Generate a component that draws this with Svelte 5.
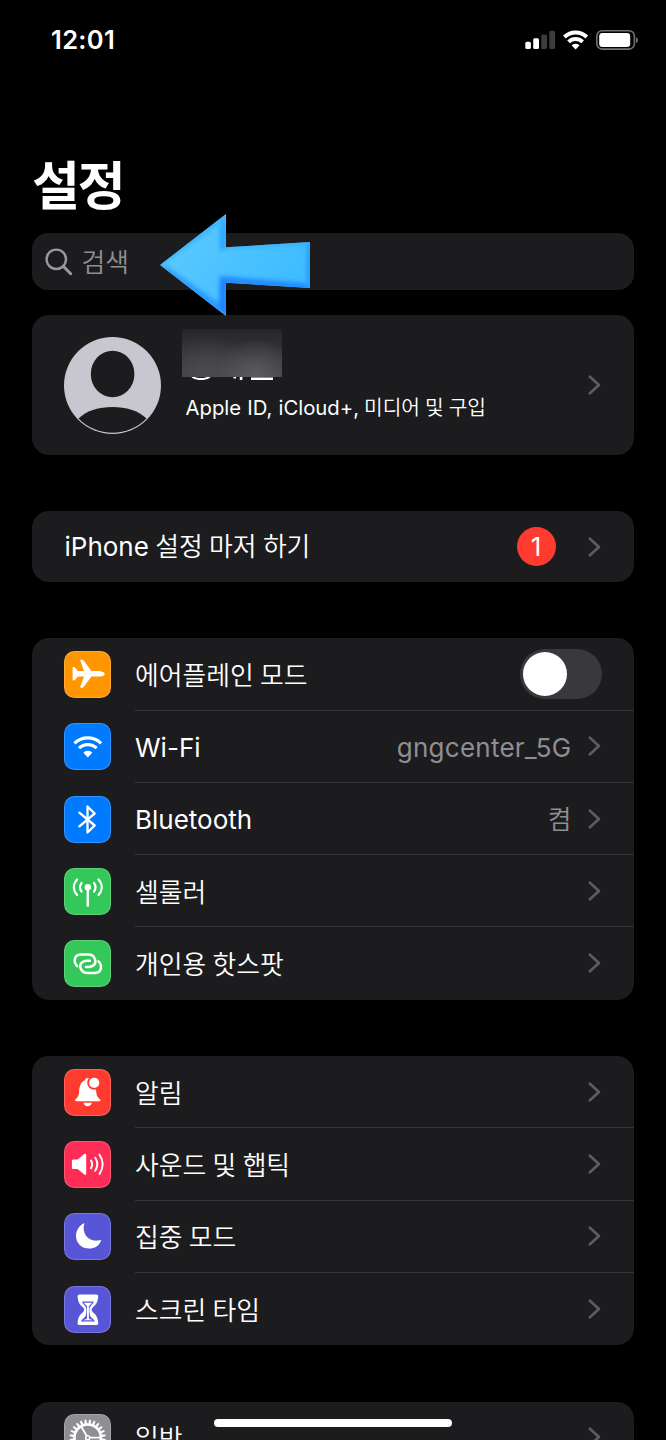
<script>
  const connectivity = [
    { icon: 'plane', color: '#ff9500', label: '에어플레인 모드', ko: true, toggle: true },
    { icon: 'wifi', color: '#007aff', label: 'Wi-Fi', value: 'gngcenter_5G' },
    { icon: 'bluetooth', color: '#007aff', label: 'Bluetooth', value: '켬', valueKo: true },
    { icon: 'cellular', color: '#34c759', label: '셀룰러', ko: true },
    { icon: 'hotspot', color: '#34c759', label: '개인용 핫스팟', ko: true }
  ];
  const alerts = [
    { icon: 'bell', color: '#ff3b30', label: '알림', ko: true },
    { icon: 'sound', color: '#ff2d55', label: '사운드 및 햅틱', ko: true },
    { icon: 'moon', color: '#5856d6', label: '집중 모드', ko: true },
    { icon: 'hourglass', color: '#5856d6', label: '스크린 타임', ko: true }
  ];
  const general = [{ icon: 'gear', color: '#8e8e93', label: '일반', ko: true }];
  const teeth = Array.from({ length: 24 }, (_, i) => i * 15);
</script>

{#snippet chevron()}
  <svg class="chevron" width="13" height="20" viewBox="0 0 13 20" fill="none" stroke="#5b5b60" stroke-width="2.800" stroke-linecap="round" stroke-linejoin="round">
    <path d="M1.900 1.700 10.900 10 1.900 18.300" />
  </svg>
{/snippet}

{#snippet glyph(name)}
  <svg width="47" height="47" viewBox="0 0 47 47" fill="none">
    {#if name === 'plane'}
      <path fill="#fff" d="M36.500 20.100h-9L19.600 9.500c-.3-.5-.7-.7-1.200-.7h-1.500c-.5 0-.8.4-.6.9l3.700 10.400h-6l-3.100-3.600c-.3-.3-.6-.4-1-.4h-.6c-.5 0-.7.3-.7.7v11.900c0 .4.3.7.7.7h.6c.4 0 .7-.1 1-.4l3.100-3.600h6l-3.700 10.400c-.2.5.1.9.6.9h1.500c.5 0 .9-.2 1.200-.7l7.900-10.600h9c2.400 0 4.200-1.100 4.200-2.450s-1.800-2.450-4.200-2.450z" />
    {:else if name === 'wifi'}
      <g stroke="#fff" stroke-width="3.100">
        <path d="M10.500 20.400a18.800 18.800 0 0 1 26.600 0" />
        <path d="M15 25.200a12.500 12.500 0 0 1 17.600 0" />
      </g>
      <path fill="#fff" d="M23.800 34.500l-4-4.200c-.4-.4-.3-.9.1-1.200a6.500 6.500 0 0 1 7.800 0c.4.300.5.800.1 1.200z" />
    {:else if name === 'bluetooth'}
      <path stroke="#fff" stroke-width="2.300" stroke-linejoin="round" stroke-linecap="round" d="M15.400 16.600 30.700 29.500l-7.200 7V10.500l7.200 7L15.400 30.400" />
    {:else if name === 'cellular'}
      <g stroke="#fff" stroke-width="2.200" stroke-linecap="round">
        <path d="M23.800 19.500v18" stroke-width="2.500" />
        <path d="M17.600 14.800c-2 2.800-2 6 0 8.800M30 14.800c2 2.800 2 6 0 8.800M13.100 11.500c-4.300 4.800-4.300 10.600 0 15.400M34.500 11.500c4.300 4.800 4.300 10.600 0 15.400" />
      </g>
      <circle cx="23.800" cy="19.300" r="3.200" fill="#fff" />
    {:else if name === 'hotspot'}
      <g stroke="#fff" stroke-width="2.500" stroke-linecap="round">
        <path d="M13.200 26.200c-3.700-3.300-3.800-11.300 3.500-11.600h7.500c6.900 0 9.600 8.200 4.500 11.300-1.200.7-2.400 1-4.300 1h-2.500" />
        <path d="M34.500 21.400c3.700 3.300 3.800 11.300-3.500 11.600h-7.500c-6.900 0-9.600-8.200-4.500-11.300 1.200-.7 2.400-1 4.300-1h2.500" />
      </g>
    {:else if name === 'bell'}
      <path fill="#fff" d="M12.200 32.200c-1 0-1.500-.9-.9-1.700 2.400-2.300 3.400-3.300 3.800-7.600.5-6 1.400-9.700 5.500-11.500.7-1.700 1.800-2.500 3.100-2.500 1.400 0 2.600.8 3.200 2.500 3.900 1.800 4.900 5.500 5.400 11.500.4 4.300 1.400 5.300 3.800 7.600.7.800.2 1.700-.9 1.700zM19.500 33.800h8.300c-.4 2-2 3.400-4.150 3.400s-3.750-1.400-4.150-3.400z" />
      <circle cx="30.200" cy="13.800" r="7" fill="#ff3b30" />
      <circle cx="30.200" cy="13.800" r="5.100" fill="#fff" />
    {:else if name === 'sound'}
      <path fill="#fff" d="M9.500 18.500h4.200l6.600-5.500c.9-.7 1.900-.3 1.900.8v19c0 1.100-1 1.500-1.900.8l-6.600-5.500H9.500c-1 0-1.600-.6-1.600-1.600v-6.400c0-1 .6-1.600 1.600-1.600z" />
      <g stroke="#fff" stroke-width="2" stroke-linecap="round">
        <path d="M27 19.500c1.500 2.400 1.500 5.200 0 7.600M31.200 16.800c2.700 4.100 2.700 8.900 0 13M35.500 13.700c4.100 6.100 4.100 13.100 0 19.200" />
      </g>
    {:else if name === 'moon'}
      <path fill="#fff" d="M20.300 11c-2.700 8.600 3.200 17.900 13.900 16.600.8-.1 1.600-.4 2-.5.500-.1.900.2.700.8-1.600 4.500-6.200 7.600-11.700 7.600-7.500 0-13.200-5.500-13.200-12.600 0-5.300 3-9.900 7.400-12.400.7-.4 1.100-.1.900.5z" />
    {:else if name === 'hourglass'}
      <path fill="#fff" d="M15.500 8.400h16.800c1.300 0 2.100.8 1.900 2.200-.5 5.800-2 8-5.300 10.700-1.700 1.400-1.700 3.500 0 4.900 3.300 2.700 4.800 4.900 5.300 10.700.2 1.400-.6 2.200-1.900 2.200H15.500c-1.300 0-2.100-.8-1.900-2.200.5-5.800 2-8 5.300-10.700 1.700-1.400 1.700-3.500 0-4.900-3.300-2.700-4.800-4.900-5.300-10.700-.2-1.400.6-2.200 1.900-2.200z" />
      <path fill="#5856d6" d="M18 15.600h11.800c-.5 2-1.500 2.800-3 4.300-.9.900-1.400 2-1.400 3.900s.1 5.600 1.400 7.100c2.200 1.800 3.500 2.300 4 4.700H17c.5-2.400 1.800-2.900 4-4.700 1.300-1.500 1.400-5.200 1.400-7.100s-.5-3-1.400-3.900c-1.500-1.500-2.500-2.300-3-4.300z" />
      <path fill="#fff" d="M19.700 16.800h8.400l-3.200 3.400v12.500l4 1.600H19l4-1.600V20.200z" />
    {:else if name === 'gear'}
      <g transform="translate(23.700 23.700)">
        {#each teeth as a}
          <path transform="rotate({a + 7.5})" d="M-1.300-14h2.600l-.5-4.200h-1.600z" fill="#fff" />
        {/each}
        <circle r="13.200" stroke="#fff" stroke-width="2.500" />
        <path stroke="#fff" stroke-width="1.800" d="M2 0h11M-1-1.700-6.500-11.200M-1 1.700-6.500 11.200" />
        <circle r="2" stroke="#fff" stroke-width="1.500" />
      </g>
    {/if}
  </svg>
{/snippet}

{#snippet list(rows)}
  <section class="card">
    {#each rows as row}
      <div class="row">
        <span class="tile" style="background:{row.color}">{@render glyph(row.icon)}</span>
        <div class="body">
          <span class={row.ko ? 'ko' : 'la'}>{row.label}</span>
          {#if row.toggle}
            <span class="toggle"><i></i></span>
          {:else}
            <span class="end">
              {#if row.value}<span class="value {row.valueKo ? 'ko' : 'la'}">{row.value}</span>{/if}
              {@render chevron()}
            </span>
          {/if}
        </div>
      </div>
    {/each}
  </section>
{/snippet}

<main>
  <header class="status">
    <time>12:01</time>
    <svg width="114" height="24" viewBox="0 0 114 24" fill="none">
      <rect x="0.300" y="15.800" width="5.600" height="7.200" rx="1.500" fill="#fff" />
      <rect x="8.200" y="12.200" width="5.800" height="10.800" rx="1.500" fill="#fff" />
      <rect x="16.300" y="8.500" width="5.800" height="14.500" rx="1.500" fill="#3c3c3e" />
      <rect x="24.300" y="4.800" width="5.800" height="18.200" rx="1.500" fill="#3c3c3e" />
      <g stroke="#fff" stroke-width="3.900">
        <path d="M39.400 11a16 16 0 0 1 22.400 0" />
        <path d="M43.600 15.900a10 10 0 0 1 14 0" />
      </g>
      <path fill="#fff" d="M50.600 23.400l-3.400-3.300c-.5-.5-.4-1 .1-1.300a5.700 5.700 0 0 1 6.600 0c.5.300.6.800.1 1.300z" />
      <rect x="71.800" y="4.700" width="37.600" height="18.400" rx="5.300" stroke="#727274" stroke-width="1.600" />
      <rect x="74.200" y="7" width="31" height="14" rx="3.200" fill="#fff" />
      <path d="M111 11.300c2.700 1 2.700 4.700 0 5.700z" fill="#727274" />
    </svg>
  </header>

  <h1>설정</h1>

  <div class="search">
    <svg width="28" height="28" viewBox="0 0 28 28" fill="none" stroke="#98989f" stroke-width="2.400" stroke-linecap="round">
      <circle cx="11.300" cy="11.300" r="9.700" />
      <path d="M18.500 18.500 25.700 25.700" stroke-width="3" />
    </svg>
    <span class="ko">검색</span>
    <svg class="arrow" width="152" height="104" viewBox="0 0 152 104">
      <defs>
        <linearGradient id="face" x1="0" y1="0" x2="1" y2="0.500">
          <stop offset="0" stop-color="#62ccff" />
          <stop offset="0.450" stop-color="#50c4ff" />
          <stop offset="1" stop-color="#3dbcff" />
        </linearGradient>
        <clipPath id="shape"><path d="M1 51 67 0v33.300L151 28v46l-84-5.300V102z" /></clipPath>
        <filter id="soft"><feGaussianBlur stdDeviation="2" /></filter>
      </defs>
      <g clip-path="url(#shape)">
        <path d="M0 0h152v104H0z" fill="url(#face)" />
        <g filter="url(#soft)">
          <path d="M67-2v36l-6 4V14z" fill="#28a5ff" />
          <path d="M67-3 1 49l4 1L60 10z" fill="#35b2ff" />
          <path d="M-1 51 67 106V94L8 53z" fill="#2a98ff" />
          <path d="M61 61 68 68v38l-8-15z" fill="#1f82ff" />
          <path d="M61 62 146 69l8 9-87-6z" fill="#218bff" />
          <path d="M62 35 67 32l85-6-6 5z" fill="#34aeff" />
          <path d="M153 25v52l-5-9V33z" fill="#2a98ff" />
        </g>
      </g>
    </svg>
  </div>

  <section class="card profile">
    <svg width="97" height="97" viewBox="0 0 97 97">
      <circle cx="48.500" cy="48.500" r="48.500" fill="#c8c7cf" />
      <ellipse cx="48.600" cy="37" rx="21.800" ry="23.200" fill="#1c1c1e" />
      <path d="M14.500 81.500C23 73.500 35 70 48.500 70s25.500 3.500 34 11.500A47.500 47.500 0 0 1 14.500 81.500z" fill="#1c1c1e" />
    </svg>
    <div class="identity">
      <div class="mask">
        <svg width="100" height="5" viewBox="0 0 100 5">
          <path d="M9.500 0h19C26 4 12 4 9.500 0z" fill="#fff" />
          <path d="M13 0h12c-2 1.300-10 1.300-12 0z" fill="#1c1c1e" />
          <path d="M51.500 0h2.500v1.500h-2.500zM57.800 0h2.600v3h-2.600zM69 .400h22v2.500H69z" fill="#fff" />
        </svg>
      </div>
      <p><span>Apple ID, iCloud+,</span> 미디어 및 구입</p>
    </div>
    {@render chevron()}
  </section>

  <section class="card setup">
    <span class="ko"><span class="la">iPhone</span> 설정 마저 하기</span>
    <span class="badge">1</span>
    {@render chevron()}
  </section>

  {@render list(connectivity)}
  {@render list(alerts)}
  {@render list(general)}

  <div class="home"></div>
</main>

<style>
  :global(body) { background: #000; }
  main {
    position: relative;
    box-sizing: border-box;
    width: 666px;
    height: 1440px;
    padding: 0 32px;
    overflow: hidden;
    background: #000;
    color: #fff;
    font-family: Inter, "Noto Sans CJK KR", sans-serif;
    font-size: 26px;
  }
  .status {
    display: flex;
    justify-content: space-between;
    align-items: flex-start;
    height: 120px;
    padding: 25.500px 0 0 19px;
    box-sizing: border-box;
    margin-right: -5px;
  }
  time { font-weight: 600; font-size: 25.500px; line-height: 28px; letter-spacing: 0.350px; }
  h1 {
    margin: 23px 0 0;
    height: 90.300px;
    font: 700 52px/80px "Noto Sans CJK KR", sans-serif;
    letter-spacing: -2px;
  }
  .search {
    position: relative;
    display: flex;
    align-items: center;
    gap: 9px;
    height: 57.200px;
    padding-left: 12.500px;
    margin-bottom: 25px;
    border-radius: 16px;
    background: #1c1c1e;
    color: #8e8e93;
  }
  .search .ko { margin-top: -2px; }
  .arrow { position: absolute; left: 127px; top: -19.500px; z-index: 2; }
  .ko { font-family: "Noto Sans CJK KR", sans-serif; font-size: 25.800px; line-height: 40px; font-weight: 350; white-space: nowrap; word-spacing: 0.600px; }
  .la { font-family: Inter, sans-serif; font-size: 26px; line-height: 40px; font-weight: 400; white-space: nowrap; }
  .card {
    border-radius: 17px;
    background: #1c1c1e;
    margin-bottom: 56.600px;
    overflow: hidden;
  }
  .profile { display: flex; align-items: center; height: 139.200px; padding: 0 33.500px 0 32px; box-sizing: border-box; }
  .identity { flex: 1; padding-left: 21px; margin-top: -16px; }
  .mask {
    width: 100px;
    height: 48px;
    background:
      radial-gradient(ellipse 42px 36px at 74px 46px, #5c5c5e, transparent),
      radial-gradient(ellipse 48px 38px at 24px 44px, #4c4c4e, transparent),
      linear-gradient(#262628, #424244);
  }
  .mask svg { display: block; transform: translateY(48px); }
  p { margin: 11px 0 1px 3.500px; font: 350 20.300px/36px "Noto Sans CJK KR", sans-serif; white-space: nowrap; word-spacing: 0.500px; }
  p span { font: 400 20.300px/30px Inter, sans-serif; }
  .setup { display: flex; align-items: center; height: 70.600px; padding: 0 33.500px 0 32.500px; box-sizing: border-box; }
  .setup .ko { margin-top: -1px; }
  .badge {
    display: grid;
    place-items: center;
    width: 39px;
    height: 39px;
    margin: 0 32px 0 auto;
    border-radius: 50%;
    background: #ff3b30;
    font-size: 26px;
  }
  .row { display: flex; align-items: center; height: 72.240px; padding-left: 32px; }
  .tile {
    width: 47px;
    height: 47px;
    flex: none;
    border-radius: 10.500px;
    box-shadow: inset 0 0 0 1px rgba(255, 255, 255, 0.200);
    overflow: hidden;
  }
  .tile svg, .chevron { display: block; }
  .body {
    display: flex;
    flex: 1;
    justify-content: space-between;
    align-items: center;
    height: 100%;
    box-sizing: border-box;
    margin-left: 24px;
    padding-right: 33.500px;
    border-bottom: 1px solid #363638;
  }
  .body .la { padding-top: 3px; }
  .row:last-child .body { border-bottom-color: transparent; }
  .end { display: flex; align-items: center; gap: 17px; }
  .value { color: #8e8e93; }
  .value.la { letter-spacing: 0.250px; margin-right: -1px; }
  .value.ko { margin: -2px -1px 0 0; }
  .toggle {
    width: 82px;
    height: 50px;
    margin-right: -1px;
    padding: 3px;
    box-sizing: border-box;
    border-radius: 25px;
    background: #39393d;
  }
  .toggle i { display: block; width: 44px; height: 44px; border-radius: 50%; background: #fff; }
  .home {
    position: absolute;
    left: 214px;
    bottom: 13px;
    width: 238px;
    height: 8px;
    border-radius: 4px;
    background: #fff;
  }
</style>
